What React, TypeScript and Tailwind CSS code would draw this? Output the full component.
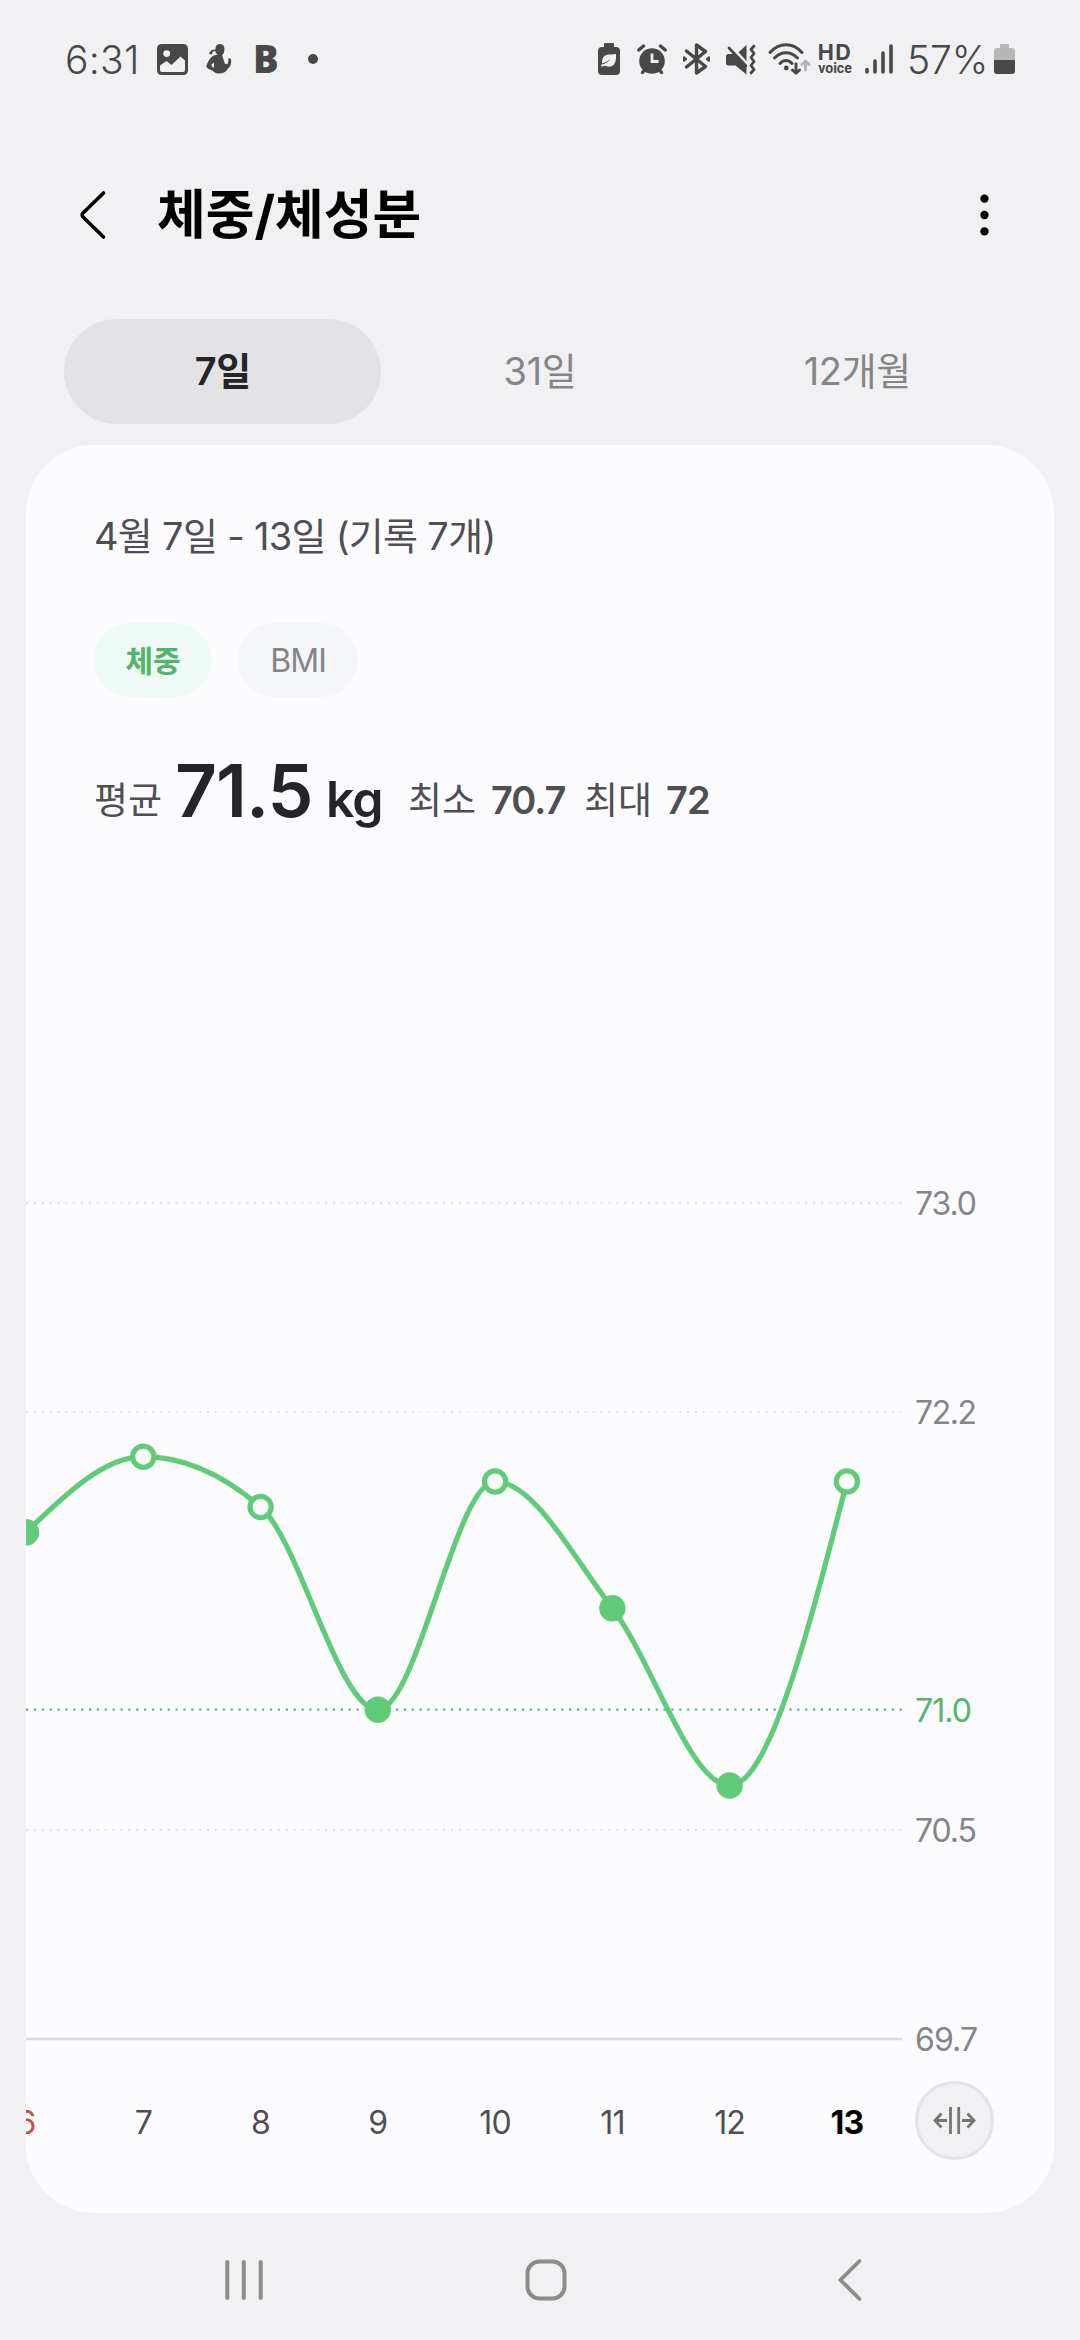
const tabs = ["7일", "31일", "12개월"];

const gridLines = [
  { label: "73.0", y: 758 },
  { label: "72.2", y: 967 },
  { label: "70.5", y: 1385 },
];

const points = [
  { day: "6", x: 0, y: 1087.3, filled: true },
  { day: "7", x: 117.3, y: 1011.7, filled: false },
  { day: "8", x: 234.6, y: 1062, filled: false },
  { day: "9", x: 351.8, y: 1264.7, filled: true },
  { day: "10", x: 469.1, y: 1036.5, filled: false },
  { day: "11", x: 586.4, y: 1163.3, filled: true },
  { day: "12", x: 703.6, y: 1340.5, filled: true },
  { day: "13", x: 820.9, y: 1036.5, filled: false },
];

// Chart svg starts below the summary, so y values are shifted by this much
const CHART_TOP = 400;

type Pt = { x: number; y: number };

// Monotone cubic curve through all points
function linePath(pts: Pt[]) {
  const n = pts.length;
  const slope = pts.slice(1).map((p, i) => (p.y - pts[i].y) / (p.x - pts[i].x));
  const t: number[] = new Array(n).fill(0);
  for (let i = 1; i < n - 1; i++) {
    const a = slope[i - 1];
    const b = slope[i];
    t[i] = a * b <= 0 ? 0 : Math.sign(a) * 2 * Math.min(Math.abs(a), Math.abs(b), Math.abs(a + b) / 4);
  }
  t[0] = (3 * slope[0] - t[1]) / 2;
  t[n - 1] = (3 * slope[n - 2] - t[n - 2]) / 2;

  let d = `M${pts[0].x} ${pts[0].y}`;
  for (let i = 1; i < n; i++) {
    const h = (pts[i].x - pts[i - 1].x) / 3;
    d += ` C${pts[i - 1].x + h} ${pts[i - 1].y + h * t[i - 1]} ${pts[i].x - h} ${pts[i].y - h * t[i]} ${pts[i].x} ${pts[i].y}`;
  }
  return d;
}

function StatusBar() {
  return (
    <div className="flex h-[118px] items-center justify-between pr-[65px] pl-[65px] text-[#484848]">
      <div className="flex items-center">
        <span className="w-[92px] text-[39px] leading-none font-[350] tracking-[0.3px]">6:31</span>
        <svg width="31" height="31" viewBox="0 0 31 31">
          <path
            fill="currentColor"
            fillRule="evenodd"
            d="M5 0H26Q31 0 31 5V26Q31 31 26 31H5Q0 31 0 26V5Q0 0 5 0ZM3 21.5V26Q3 28 5 28H26Q28 28 28 26V16.5L23.5 12.5L14.5 21L9.5 17ZM9.7 6.2A3.4 3.4 0 1 0 9.7 13A3.4 3.4 0 1 0 9.7 6.2Z"
          />
        </svg>
        <svg className="ml-[18px]" width="26" height="30" viewBox="0 0 26 30" fill="currentColor">
          <path d="M9.5 4Q10 0 14 0Q18.5 .2 18.5 5.5Q18.5 9.5 16.2 11Q16.5 12.5 17.2 14.5L18.8 19.5Q20.5 21 21.8 19.5Q22.8 17.5 22.2 14.8Q23.5 13.6 25 15.3Q26 21.5 21.8 24.8Q19.5 29.5 13 29.5Q8.5 29.5 6.5 26.5Q1.5 25 .2 22.5Q2 15.5 7.5 11.5L11.5 10.8Q9.6 9.3 9.3 7L6.8 7.8L5.8 10.5L3 10Q3.8 6.5 7 5.8L9.3 5.5Z" />
          <path d="M5.5 20.5L8 18.5V23.8L5.8 22.5Z" fill="#f1f1f3" />
        </svg>
        <span className="mb-0.5 ml-[21px] w-[26px] font-['Open_Sans'] text-[38px] leading-none font-extrabold">B</span>
        <span className="ml-[29px] size-2.5 rounded-full bg-current" />
      </div>

      <div className="flex items-center">
        <svg width="22" height="32" viewBox="0 0 22 32">
          <path fill="currentColor" d="M7 0H15Q16 0 16 1V4H18Q22 4 22 8V28Q22 32 18 32H4Q0 32 0 28V8Q0 4 4 4H6V1Q6 0 7 0Z" />
          <path fill="#f1f1f3" d="M18 11Q18.5 19 15.5 22Q12 25 7.5 22.8Q5.5 23.5 3 23.5L3.2 21.8Q9 20.5 12.5 16Q9 19 4 20.5Q3.5 12.5 10 11.5Q14 11.5 18 11Z" />
        </svg>
        <svg className="ml-[17px]" width="30" height="30" viewBox="0 0 30 30">
          <circle cx="15" cy="17" r="12.8" fill="currentColor" />
          <g stroke="currentColor" strokeWidth="3.4" strokeLinecap="round" fill="none">
            <path d="M1.8 6L6.5 2M28.2 6L23.5 2M5.5 28.5L8 25.5M24.5 28.5L22 25.5" />
          </g>
          <path d="M15 9.5V17.5H21.5" stroke="#f1f1f3" strokeWidth="2.8" fill="none" />
        </svg>
        <svg className="ml-[15px]" width="29" height="32" viewBox="0 0 29 32" fill="none" stroke="currentColor" strokeWidth="3.4" strokeLinejoin="round" strokeLinecap="round">
          <path d="M4.5 8L23.5 23.5L14.5 30V2L23.5 8.5L4.5 24" />
          <path d="M2 14.2L4.2 16L2 17.8ZM27 14.2L24.8 16L27 17.8Z" strokeWidth="2" fill="currentColor" />
        </svg>
        <svg className="ml-[15px]" width="30" height="31" viewBox="0 0 30 31">
          <path fill="currentColor" d="M2.5 10H8L20.5 22.5V30.5L9.5 21.5H2.5Q0 21.5 0 19V12.5Q0 10 2.5 10ZM20.5 1V17L12.5 8.3Z" />
          <path stroke="currentColor" strokeWidth="2.8" strokeLinecap="round" d="M3 4L20 22" />
          <path stroke="currentColor" strokeWidth="2.8" strokeLinecap="round" strokeLinejoin="round" fill="none" d="M28 2L25 5.5L28 9.5L25 13.5L28 17.5L25 21.5L28 25.5L25 29" />
        </svg>
        <svg className="ml-[12px]" width="43" height="32" viewBox="0 0 43 32" fill="none" stroke="currentColor" strokeWidth="2.9" strokeLinecap="round">
          <path d="M2 9.5Q9 1.8 18 1.8T34 9.5M6.5 15Q11.5 9.8 18 9.8T29.5 15M12 20.5Q14.5 17.5 18 17.5T24 20.5" />
          <circle cx="18.3" cy="25" r="2.4" fill="currentColor" stroke="none" />
          <path strokeLinejoin="round" d="M28 21V29.5M24.5 27L28 30.2L31.5 27" />
          <path stroke="#b3b3b5" strokeLinejoin="round" d="M37.5 27V19M34 21.5L37.5 18.3L41 21.5" />
        </svg>
        <div className="ml-[7px] flex w-[34px] flex-col items-center">
          <span className="text-[21.5px] leading-[18px] font-bold tracking-[1.5px]">HD</span>
          <span className="font-[Roboto] text-[14px] leading-[14px] font-bold">voice</span>
        </div>
        <svg className="ml-[13px]" width="28" height="30" viewBox="0 0 28 30" stroke="currentColor" strokeWidth="3.6" strokeLinecap="round">
          <path d="M2 25.5V28M10 17V28M18 9V28M26 2V28" />
        </svg>
        <span className="ml-[14px] w-[83px] text-[39px] leading-none font-[350] tracking-[-0.1px]">57%</span>
        <svg className="ml-[4px]" width="21" height="30" viewBox="0 0 21 30">
          <path fill="#b7b7b9" d="M6 0H15V4H18Q21 4 21 7V16H0V7Q0 4 3 4H6Z" />
          <path fill="currentColor" d="M0 16H21V27Q21 30 18 30H3Q0 30 0 27Z" />
        </svg>
      </div>
    </div>
  );
}

function Header() {
  return (
    <header className="flex h-[193px] items-center pr-[91px] pl-[78px]">
      <svg width="29" height="50" viewBox="0 0 29 50" fill="none" stroke="#000" strokeWidth="3.6" strokeLinecap="round" strokeLinejoin="round">
        <path d="M25.5 3L4.8 23.3Q3.6 25 4.8 26.7L25.5 47" />
      </svg>
      <h1 className="ml-[50px] flex-1 pt-0.5 text-[53px] leading-none font-bold text-black">체중/체성분</h1>
      <svg width="9" height="42" viewBox="0 0 9 42">
        <circle cx="4.5" cy="4.6" r="4.2" />
        <circle cx="4.5" cy="21" r="4.2" />
        <circle cx="4.5" cy="37.4" r="4.2" />
      </svg>
    </header>
  );
}

function Chart() {
  const shifted = points.map((p) => ({ ...p, y: p.y - CHART_TOP }));

  return (
    <svg className="block" width="1028" height="1368" viewBox="0 0 1028 1368" fontSize="32">
      <g fill="#858587">
        {gridLines.map((line) => (
          <g key={line.label}>
            <path d={`M0 ${line.y - CHART_TOP}H876`} stroke="#e3e3e5" strokeWidth="2" strokeDasharray="2 5.87" />
            <text x="889" y={line.y - CHART_TOP + 12} textLength="62">{line.label}</text>
          </g>
        ))}
        <path d="M0 1194H876" stroke="#dadbdd" strokeWidth="2.5" />
        <text x="889" y="1206" textLength="63">69.7</text>
      </g>
      <path d="M0 864.7H876" stroke="#5cb577" strokeWidth="2.2" strokeDasharray="2.2 5.67" />
      <text x="889" y="876.5" textLength="57" fill="#53b56c">71.0</text>

      <path d={linePath(shifted)} fill="none" stroke="#60cc79" strokeWidth="5.2" />
      {shifted.map((p) => (
        <circle
          key={p.day}
          cx={p.x}
          cy={p.y}
          r={p.filled ? 13.2 : 10.6}
          fill={p.filled ? "#60cc79" : "#fcfcfe"}
          stroke="#60cc79"
          strokeWidth={p.filled ? 0 : 5.2}
        />
      ))}

      {shifted.map((p) => (
        <text
          key={p.day}
          x={p.x}
          y="1289"
          textAnchor="middle"
          letterSpacing="-0.8"
          fill={p.day === "6" ? "#c5503f" : p.day === "13" ? "#000" : "#4f4f53"}
          fontWeight={p.day === "13" ? 700 : 400}
        >
          {p.day}
        </text>
      ))}

      <circle cx="928.5" cy="1275.5" r="38" fill="#f1f1f3" stroke="#e3e4e6" strokeWidth="3" />
      <g fill="none" stroke="#757575" strokeWidth="2.8">
        <path d="M924.5 1262V1289M932.7 1262V1289" />
        <path d="M921 1275.5H909.5M915.5 1268.5L909 1275.5L915.5 1282.5" />
        <path d="M936 1275.5H947.5M941.5 1268.5L948 1275.5L941.5 1282.5" />
      </g>
    </svg>
  );
}

function NavBar() {
  return (
    <nav className="flex h-[127px] items-center pt-[7px] pl-[224px]">
      <svg width="40" height="46" viewBox="0 0 40 46" stroke="#8c8c8c" strokeWidth="4" strokeLinecap="round">
        <path d="M3.3 5V41M19.8 5V41M36.7 5V41" />
      </svg>
      <svg className="ml-[259px]" width="46" height="46" viewBox="0 0 46 46" fill="none" stroke="#8c8c8c" strokeWidth="4">
        <rect x="4.5" y="4.5" width="37" height="37" rx="12" />
      </svg>
      <svg className="ml-[266px]" width="30" height="46" viewBox="0 0 30 46" fill="none" stroke="#8c8c8c" strokeWidth="3.8" strokeLinecap="round">
        <path d="M24.5 4L5.5 23L24.5 42" />
      </svg>
    </nav>
  );
}

export default function App() {
  return (
    <div className="h-[2340px] w-[1080px] overflow-hidden bg-[#f1f1f3] font-[Inter,'Noto_Sans_CJK_KR',sans-serif]">
      <StatusBar />
      <Header />

      <div className="mt-2 grid h-[105px] grid-cols-3 px-16">
        {tabs.map((tab, i) => (
          <button
            key={tab}
            className={
              i === 0
                ? "rounded-full bg-[#e3e3e5] text-[38px] font-semibold tracking-[-0.5px] text-[#252528]"
                : "rounded-full text-[38px] tracking-[-0.3px] text-[#858587]"
            }
          >
            {tab}
          </button>
        ))}
      </div>

      <main className="mx-[26px] mt-[21px] h-[1768px] overflow-hidden rounded-[68px] bg-[#fcfcfe]">
        <div className="h-[400px] pt-[65px] pl-[68px]">
          <p className="text-[38px] leading-[52px] tracking-[-0.7px] text-[#4f4f53]">4월 7일 - 13일 (기록 7개)</p>
          <div className="mt-[61px] flex gap-[26px]">
            <button className="h-[74px] w-[118px] rounded-full bg-[#effaf6] pt-0.5 text-[30px] font-bold text-[#53b56c]">체중</button>
            <button className="h-[74px] w-[120px] rounded-full bg-[#f5f6f8] pt-0.5 text-[32px] tracking-[-1px] text-[#858587]">BMI</button>
          </div>
          <div className="mt-[49px] flex items-baseline text-[37px] leading-[90px] whitespace-nowrap text-[#4f4f53]">
            <span className="w-[81px] -translate-y-[3px]">평균</span>
            <span className="w-[151px] text-[73px] font-semibold tracking-[-1px] text-[#252528]">71.5</span>
            <span className="w-[82px] text-[50px] font-semibold tracking-[-1px] text-[#252528]">kg</span>
            <span className="flex -translate-y-[3px] items-baseline">
              <span className="w-[83px]">최소</span>
              <span className="w-[93px] text-[38px] font-semibold tracking-[-1px]">70.7</span>
              <span className="w-[82px]">최대</span>
              <span className="text-[38px] font-semibold tracking-[-1px]">72</span>
            </span>
          </div>
        </div>
        <Chart />
      </main>

      <NavBar />
    </div>
  );
}
